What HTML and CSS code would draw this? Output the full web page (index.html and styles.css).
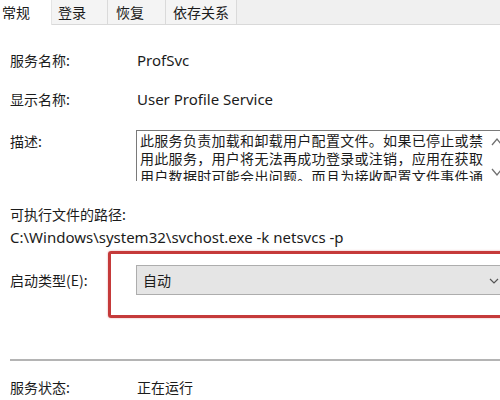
FILE: index.html
```html
<!DOCTYPE html>
<html lang="zh-CN">
<head>
<meta charset="utf-8">
<link rel="stylesheet" href="styles.css">
</head>
<body>
<div class="tabs">
  <div class="tab active">常规</div>
  <div class="tab t2">登录</div>
  <div class="tab t3">恢复</div>
  <div class="tab t4">依存关系</div>
</div>
<div class="content">
  <div class="row r1"><span class="label">服务名称:</span><span class="value">ProfSvc</span></div>
  <div class="row r2"><span class="label">显示名称:</span><span class="value">User Profile Service</span></div>
  <div class="row r3">
    <span class="label">描述:</span>
    <div class="desc">
      <div class="desc-text">此服务负责加载和卸载用户配置文件。如果已停止或禁<br>用此服务，用户将无法再成功登录或注销，应用在获取<br>用户数据时可能会出问题。而且为接收配置文件事件通</div>
      <div class="scroll">
        <svg width="10" height="50" viewBox="0 0 10 50"><path d="M1 14 L6 8 L10 13" fill="none" stroke="#707070" stroke-width="1.3"/><path d="M1 38 L6 44 L10 39" fill="none" stroke="#707070" stroke-width="1.3"/></svg>
      </div>
    </div>
  </div>
  <div class="path-label">可执行文件的路径:</div>
  <div class="path">C:\Windows\system32\svchost.exe -k netsvcs -p</div>
  <div class="row r4">
    <span class="label2">启动类型(E):</span>
    <div class="mark">
      <div class="select"><span>自动</span>
        <svg class="chev" width="10" height="8" viewBox="0 0 10 8"><path d="M1 2 L5 6 L9 2" fill="none" stroke="#555" stroke-width="1.2"/></svg>
      </div>
    </div>
  </div>
  <div class="sep"></div>
  <div class="row r5"><span class="label">服务状态:</span><span class="value cjk">正在运行</span></div>
</div>
</body>
</html>
```
FILE: styles.css
```css
html, body {
  margin: 0;
  padding: 0;
  overflow: hidden;
  background: #ffffff;
  width: 500px;
  height: 400px;
}
body {
  font-family: "Noto Sans", "Noto Sans CJK SC", sans-serif;
  font-size: 14px;
  color: #1b1b1b;
}
.tabs {
  display: flex;
  height: 24px;
  background: #f0f0f0;
  border-bottom: 1px solid #d9d9d9;
}
.tab {
  height: 24px;
  line-height: 24px;
  font-family: "Noto Sans CJK SC", sans-serif;
  font-size: 14px;
  background: #f4f4f4;
  border-right: 1px solid #dadada;
  box-sizing: border-box;
}
.tab.active {
  background: #ffffff;
  width: 52px;
  padding-left: 2px;
  height: 25px;
  border-right: 1px solid #e4e4e4;
}
.tab.t2 { width: 56px; padding-left: 6px; }
.tab.t3 { width: 58px; padding-left: 8px; }
.tab.t4 { width: 71px; padding-left: 7px; }
.content {
  padding-left: 10px;
}
.row {
  display: flex;
  align-items: flex-start;
}
.label {
  width: 127px;
  flex: none;
  line-height: 20px;
  font-family: "Noto Sans CJK SC", sans-serif;
}
.value {
  line-height: 20px;
  font-size: 15px;
  white-space: nowrap;
}
.value.cjk {
  font-size: 14px;
  font-family: "Noto Sans CJK SC", sans-serif;
}
.r1 { margin-top: 25px; }
.r2 { margin-top: 19px; }
.r3 { margin-top: 21px; }
.r3 .label { padding-top: 1px; width: 126px; }
.desc {
  position: relative;
  width: 380px;
  height: 50px;
  border: 1px solid #7a7a7a;
  border-bottom: none;
  overflow: hidden;
  flex: none;
}
.desc-text {
  font-family: "Noto Sans CJK SC", sans-serif;
  font-size: 14px;
  letter-spacing: 0.3px;
  line-height: 18px;
  padding: 0 0 0 3px;
  white-space: nowrap;
}
.scroll {
  position: absolute;
  left: 354px;
  top: 0;
  width: 12px;
  height: 50px;
  background: #ffffff;
}
.path-label {
  margin-top: 23px;
  line-height: 20px;
  font-family: "Noto Sans CJK SC", sans-serif;
}
.path {
  margin-top: 3px;
  line-height: 20px;
  font-size: 15px;
  white-space: nowrap;
}
.r4 {
  margin-top: 4px;
  align-items: flex-start;
}
.label2 {
  width: 98px;
  flex: none;
  margin-top: 19px;
  line-height: 20px;
  font-family: "Noto Sans CJK SC", sans-serif;
}
.mark {
  flex: none;
  width: 420px;
  border: 3px solid #c53a3a;
  border-radius: 3px;
  padding: 11px 0 20px 25px;
  box-shadow: 0 0 2px rgba(200, 60, 60, 0.5);
}
.select {
  position: relative;
  height: 28px;
  width: 380px;
  background: #e5e5e5;
  border: 1px solid #adadad;
  line-height: 28px;
  padding-left: 6px;
  box-sizing: content-box;
  font-family: "Noto Sans CJK SC", sans-serif;
}
.chev {
  position: absolute;
  left: 352px;
  top: 11px;
}
.sep {
  margin-top: 41px;
  height: 2px;
  background: #b4b4b4;
  width: 500px;
}
.r5 { margin-top: 16px; }
```
